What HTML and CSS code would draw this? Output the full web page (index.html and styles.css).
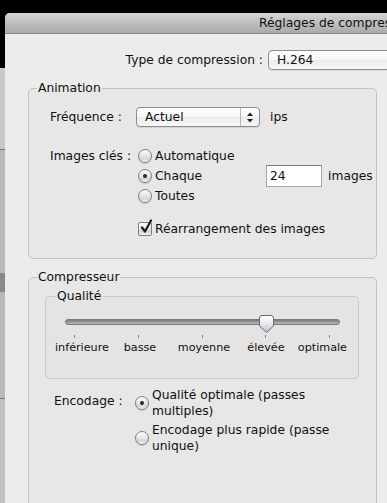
FILE: index.html
```html
<!DOCTYPE html>
<html lang="fr">
<head>
  <meta charset="UTF-8" />
  <meta name="viewport" content="width=device-width, initial-scale=1.0" />
  <title>Réglages de compression</title>
  <link rel="stylesheet" href="styles.css">
</head>
<body>
  <div class="screen">
    <div class="backdrop"></div>
    <div class="sheet">
      <div class="titlebar"><span class="title">Réglages de compression</span></div>
      <div class="content">
        <div class="type-row">
          <span class="type-label">Type de compression :</span>
          <div class="popup popup-wide"><span>H.264</span></div>
        </div>

        <fieldset class="group">
          <legend>Animation</legend>
          <div class="group-body anim-body">
            <div class="row row-freq">
              <span class="row-label">Fréquence :</span>
              <div class="popup popup-freq">
                <span class="popup-text">Actuel</span>
                <span class="stepper">
                  <svg width="8" height="11" viewBox="0 0 8 11">
                    <path d="M4 0.5 L7 4 H1 Z" fill="#222"/>
                    <path d="M4 10.5 L7 7 H1 Z" fill="#222"/>
                  </svg>
                </span>
              </div>
              <span class="unit">ips</span>
            </div>

            <div class="row row-keys">
              <span class="row-label">Images clés :</span>
              <div class="choices">
                <div class="choice"><span class="radio"></span><span>Automatique</span></div>
                <div class="choice">
                  <span class="radio on"></span>
                  <span class="choice-text">Chaque</span>
                  <input class="field" type="text" value="24">
                  <span class="unit-images">images</span>
                </div>
                <div class="choice"><span class="radio"></span><span>Toutes</span></div>
              </div>
            </div>

            <div class="row row-check">
              <span class="row-label"></span>
              <span class="checkbox">
                <svg width="14" height="16" viewBox="0 0 14 16">
                  <path d="M3 8.5 L6 12.5 L12 1.5" fill="none" stroke="#1e1e1e" stroke-width="2.2" stroke-linecap="round" stroke-linejoin="round"/>
                </svg>
              </span>
              <span>Réarrangement des images</span>
            </div>
          </div>
        </fieldset>

        <fieldset class="group group-comp">
          <legend>Compresseur</legend>
          <div class="group-body comp-body">
            <fieldset class="group group-quality">
              <legend>Qualité</legend>
              <div class="quality-body">
                <svg class="slider" width="312" height="30" viewBox="0 0 312 30">
                  <defs>
                    <linearGradient id="track" x1="0" y1="0" x2="0" y2="1">
                      <stop offset="0" stop-color="#6f6f6f"/>
                      <stop offset="0.5" stop-color="#9a9a9a"/>
                      <stop offset="1" stop-color="#c4c4c4"/>
                    </linearGradient>
                    <linearGradient id="knob" x1="0" y1="0" x2="0" y2="1">
                      <stop offset="0" stop-color="#ffffff"/>
                      <stop offset="0.5" stop-color="#e6eaee"/>
                      <stop offset="1" stop-color="#b7c0c9"/>
                    </linearGradient>
                  </defs>
                  <rect x="19.5" y="9.5" width="274" height="5" rx="2.5" fill="url(#track)" stroke="#7a7a7a"/>
                  <g stroke="#8a8a8a" stroke-width="1">
                    <line x1="28.5" y1="25" x2="28.5" y2="28"/>
                    <line x1="92.5" y1="25" x2="92.5" y2="28"/>
                    <line x1="156.5" y1="25" x2="156.5" y2="28"/>
                    <line x1="219.5" y1="25" x2="219.5" y2="28"/>
                    <line x1="283.5" y1="25" x2="283.5" y2="28"/>
                  </g>
                  <path d="M213.5 8 Q213.5 5.5 216 5.5 H225 Q227.5 5.5 227.5 8 V16 L220.5 22.5 L213.5 16 Z" fill="url(#knob)" stroke="#6a6a6a"/>
                </svg>
                <div class="ticks">
                  <span class="tick tick-low">inférieure</span>
                  <span class="tick tick-basse">basse</span>
                  <span class="tick tick-moyenne">moyenne</span>
                  <span class="tick tick-elevee">élevée</span>
                  <span class="tick tick-max">optimale</span>
                </div>
              </div>
            </fieldset>

            <div class="encode-row">
              <span class="encode-label">Encodage :</span>
              <div class="encode-options">
                <div class="option">
                  <span class="radio on"></span>
                  <span class="option-text">Qualité optimale (passes<br>multiples)</span>
                </div>
                <div class="option">
                  <span class="radio"></span>
                  <span class="option-text">Encodage plus rapide (passe<br>unique)</span>
                </div>
              </div>
            </div>
          </div>
        </fieldset>
      </div>
    </div>
  </div>
</body>
</html>
```

FILE: styles.css
```css
* {
  box-sizing: border-box;
}
body {
  margin: 0;
  background: #000;
  font-family: "DejaVu Sans", "Lucida Grande", sans-serif;
  font-size: 12.3px;
  color: #111;
}
.screen {
  display: flex;
  width: 387px;
  height: 503px;
  overflow: hidden;
}
.backdrop {
  width: 5px;
  flex: none;
  background: linear-gradient(#000 0 68px, #c9c9c9 68px 149px, #777 149px 150px, #b9b9b9 150px 273px,
    #8a8a8a 273px 292px, #b9b9b9 292px 398px, #7a7a7a 398px 399px, #c2c2c2 399px);
}
.sheet {
  flex: 1;
  margin-top: 13px;
  background: #ececec;
  border-top-left-radius: 5px;
  overflow: hidden;
}
.titlebar {
  height: 21px;
  background: linear-gradient(#d3d3d3, #aaaaaa);
  border-bottom: 1px solid #8a8a8a;
  white-space: nowrap;
  overflow: hidden;
}
.title {
  display: block;
  padding-left: 254px;
  line-height: 20px;
}
.content {
  padding-top: 16px;
}

/* compression type */
.type-row {
  display: flex;
  align-items: center;
  height: 20px;
  white-space: nowrap;
}
.type-label {
  width: 258px;
  flex: none;
  text-align: right;
}
.popup {
  display: flex;
  align-items: center;
  height: 20px;
  border: 1px solid #8c8c8c;
  border-radius: 4px;
  background: linear-gradient(#ffffff, #f6f6f6 50%, #ebebeb 51%, #f7f7f7);
  box-shadow: 0 1px 0 rgba(0,0,0,0.08);
}
.popup-wide {
  margin-left: 5px;
  width: 140px;
  flex: none;
  padding-left: 8px;
}

/* group boxes */
.group {
  margin: 11px 10px 0 23px;
  padding: 0;
  border: 1px solid #c3c3c3;
  border-radius: 5px;
  background: #e7e7e7;
  min-width: 0;
}
.group legend {
  margin-left: 8px;
  padding: 0 1px;
  line-height: 15px;
}
.anim-body {
  padding: 11px 0 19px 21px;
}
.row {
  display: flex;
  white-space: nowrap;
}
.row-label {
  width: 86px;
  flex: none;
}
.row-freq {
  align-items: center;
  height: 20px;
}
.popup-freq {
  width: 124px;
  padding-left: 8px;
}
.popup-text {
  flex: 1;
}
.stepper {
  width: 19px;
  height: 100%;
  display: flex;
  align-items: center;
  justify-content: center;
  border-left: 1px solid #b5b5b5;
}
.unit {
  margin-left: 10px;
}
.row-keys {
  margin-top: 19px;
}
.row-keys .row-label {
  line-height: 20px;
}
.choices {
  display: flex;
  flex-direction: column;
}
.choice {
  display: flex;
  align-items: center;
  height: 20px;
}
.choice-text {
  width: 111px;
}
.field {
  width: 56px;
  height: 22px;
  border: 1px solid #a6a6a6;
  border-top-color: #7c7c7c;
  background: #fff;
  font: inherit;
  color: #111;
  padding: 0 0 0 3px;
  margin: 0;
  outline: none;
}
.unit-images {
  margin-left: 6px;
}

/* radios & checkbox */
.radio {
  position: relative;
  width: 14px;
  height: 14px;
  flex: none;
  margin: 0 3px 0 2px;
  border: 1px solid #7f7f7f;
  border-radius: 50%;
  background: linear-gradient(#fcfcfc, #e4e4e4 55%, #d4d4d4 70%, #f4f4f4);
  box-shadow: 0 1px 1px rgba(0,0,0,0.15);
}
.radio.on::after {
  content: "";
  position: absolute;
  left: 4px;
  top: 4px;
  width: 4px;
  height: 4px;
  border-radius: 50%;
  background: #2a2a2a;
}
.row-check {
  margin-top: 13px;
  align-items: center;
  height: 20px;
}
.checkbox {
  position: relative;
  width: 14px;
  height: 14px;
  flex: none;
  margin: 0 3px 0 2px;
  border: 1px solid #7f7f7f;
  border-radius: 2px;
  background: linear-gradient(#fcfcfc, #e4e4e4 55%, #d4d4d4 70%, #f4f4f4);
}
.checkbox svg {
  position: absolute;
  left: 0;
  top: -4px;
}

/* compressor */
.group-comp {
  height: 260px;
}
.comp-body {
  padding: 0;
}
.group-quality {
  margin: 4px 17px 0 16px;
  background: #e4e4e4;
  border-color: #c9c9c9;
}
.group-quality legend {
  margin-left: 10px;
}
.quality-body {
  padding: 6px 0 23px 0;
}
.slider {
  display: block;
}
.ticks {
  position: relative;
  height: 15px;
  line-height: 15px;
  font-size: 11.2px;
  white-space: nowrap;
}
.tick {
  position: absolute;
  top: 0;
}
.tick-low {
  left: 9px;
}
.tick-basse {
  left: 94px;
  transform: translateX(-50%);
}
.tick-moyenne {
  left: 158px;
  transform: translateX(-50%);
}
.tick-elevee {
  left: 220px;
  transform: translateX(-50%);
}
.tick-max {
  right: 11px;
}

.encode-row {
  display: flex;
  margin: 8px 0 0 25px;
  white-space: nowrap;
}
.encode-label {
  width: 81px;
  flex: none;
  margin-top: 6px;
  line-height: 16px;
}
.option {
  display: flex;
  align-items: center;
}
.option + .option {
  margin-top: 3px;
}
.option .radio {
  margin: 0 3px 0 0;
}
.option-text {
  line-height: 16px;
}
```
